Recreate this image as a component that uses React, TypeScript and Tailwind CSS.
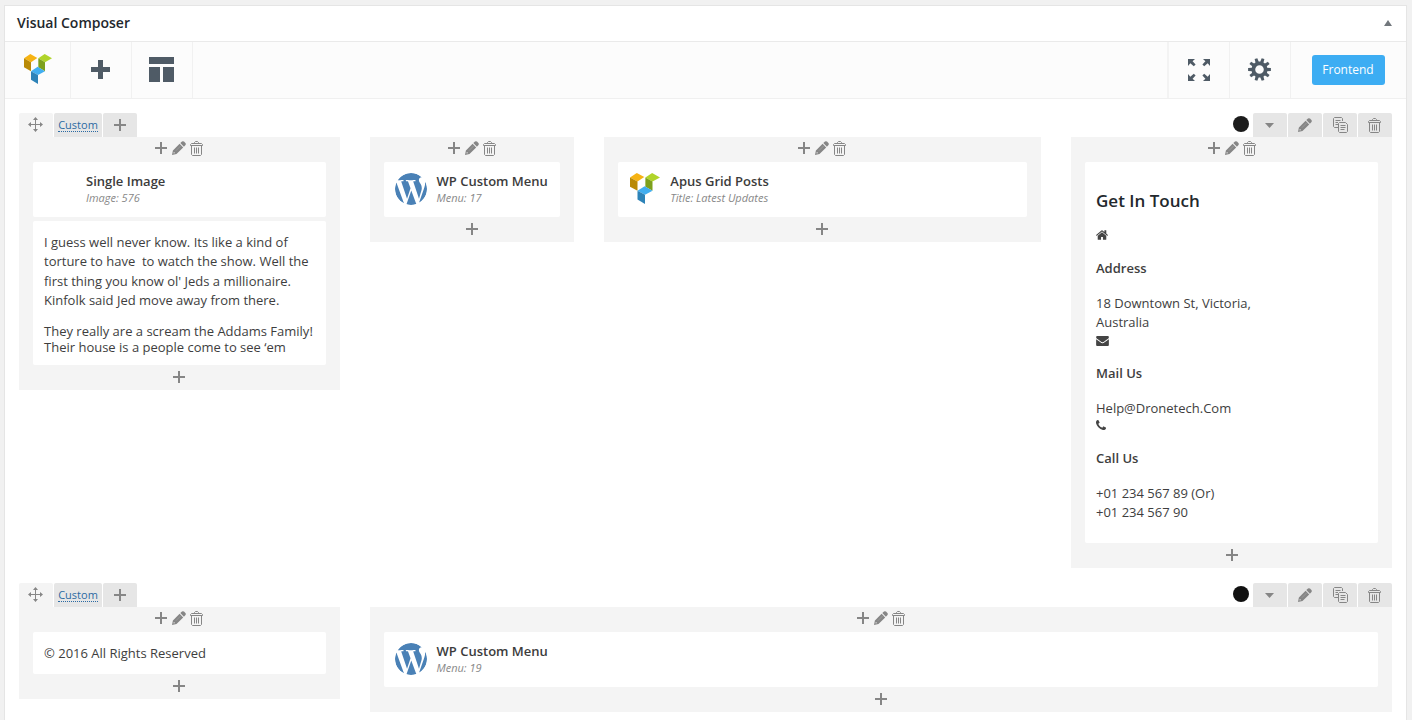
import type { ReactNode } from "react";
import { FaWordpress } from "react-icons/fa";

const HOME =
  "M1472 992v480q0 26-19 45t-45 19h-384v-384h-256v384h-384q-26 0-45-19t-19-45v-480q0-1 .5-3t.5-3l575-474 575 474q1 2 1 6zm223-69l-62 74q-8 9-21 11h-3q-13 0-21-7l-692-577-692 577q-12 8-24 7-13-2-21-11l-62-74q-8-10-7-23.5t11-21.5l719-599q32-26 76-26t76 26l244 204v-195q0-14 9-23t23-9h192q14 0 23 9t9 23v408l219 182q10 8 11 21.5t-7 23.5z";
const MAIL =
  "M1792 710v794q0 66-47 113t-113 47h-1472q-66 0-113-47t-47-113v-794q44 49 101 87 362 246 497 345 57 42 92.5 65.5t94.5 48 110 24.5h2q51 0 110-24.5t94.5-48 92.5-65.5q170-123 498-345 57-39 100-87zm0-294q0 79-49 151t-122 123q-376 261-468 325-10 7-42.5 31t-54 38.5-52 32.5-57.5 27-50 9h-2q-23 0-50-9t-57.5-27-52-32.5-54-38.5-42.5-31q-91-64-262-182.5t-205-142.5q-62-42-117-115.5t-55-136.5q0-78 41.5-130t118.5-52h1472q65 0 112.5 47t47.5 113z";
const PHONE =
  "M1600 1240q0 27-10 70.5t-21 68.5q-21 50-122 106-94 51-186 51-27 0-52.5-3.5t-57.5-12.5-47.5-14.5-55.5-20.5-49-18q-98-35-175-83-128-79-264.5-215.5t-215.5-264.5q-48-77-83-175-3-9-18-49t-20.5-55.5-14.5-47.5-12.5-57.5-3.5-52.5q0-92 51-186 56-101 106-122 25-11 68.5-21t70.5-10q14 0 21 3 18 6 53 76 11 19 30 54t35 63.5 31 53.5q3 4 17.5 25t21.5 35.5 7 28.5q0 20-28.5 50t-62 55-62 53-28.5 46q0 9 5 22.5t8.5 20.5 14 24 11.5 19q76 137 174 235t235 174q2 1 19 11.5t24 14 20.5 8.5 22.5 5q18 0 46-28.5t53-62 55-62 50-28.5q14 0 28.5 7t35.5 21.5 25 17.5q25 15 53.5 31t63.5 35 54 30q70 35 76 53 3 7 3 21z";

function CubesLogo({ className }: { className: string }) {
  return (
    <svg viewBox="0 0 84 91" preserveAspectRatio="none" className={className}>
      <path fill="#f6b313" d="M0 13 19 0l21 12-19 13z" />
      <path fill="#b98a06" d="m0 13 21 12v27L0 40z" />
      <path fill="#b0d42a" d="M43 13 62 0l22 13-21 12z" />
      <path fill="#7da01c" d="m43 13 20 12v27L43 40z" />
      <path fill="#41aef0" d="M21 52 41 39l22 13-21 12z" />
      <path fill="#2d83b8" d="m21 52 21 12v27L21 78z" />
    </svg>
  );
}

function PlusIcon() {
  return (
    <svg width="12" height="12" fill="#868686" shapeRendering="crispEdges">
      <path d="M5 0h2v12H5zM0 5h12v2H0z" />
    </svg>
  );
}

function PencilIcon() {
  return (
    <svg width="14" height="14" viewBox="0 0 14 14" fill="#868686">
      <path d="M0 14 .9 9.5 7.6 2.8l3.6 3.6-6.7 6.7zM8.3 2.1 10 .5Q11-.2 12 .6l1.4 1.4q.8 1 .1 1.9l-1.6 1.8z" />
      <path d="m1.9 11 1.1 1.1-1.1.4-.4-.4z" fill="#f4f4f4" />
      <path d="m3.8 9.8 5-5" stroke="#a8a8a8" strokeWidth=".6" />
    </svg>
  );
}

function TrashIcon() {
  return (
    <svg width="13" height="15" viewBox="0 0 13 15" fill="none" stroke="#868686">
      <path d="M4.5 2.5v-1l1-1h2l1 1v1M.5 4.5v-1l1-1h10l1 1v1zM1.5 4.5v9l1 1h8l1-1v-9M4.5 6.5v6M6.5 6.5v6M8.5 6.5v6" />
    </svg>
  );
}

function CopyIcon() {
  return (
    <svg width="15" height="16" viewBox="0 0 15 16" fill="none" stroke="#868686">
      <path d="M5 10.5H1.5l-1-1v-8l1-1h7l1 1V4M2.5 3.5h5M2.5 5.5H5M2.5 7.5H5M6.5 5.5h6l2 2v7l-1 1h-7l-1-1v-8zM7.5 8.5h5M7.5 10.5h5M7.5 12.5h4" />
    </svg>
  );
}

function MoveIcon() {
  return (
    <svg width="15" height="15" viewBox="0 0 15 15" fill="#868686">
      <path d="M7 2h1v11H7zM2 7h11v1H2zM7.5 0 10 3H5zM7.5 15 5 12h5zM0 7.5 3 5v5zM15 7.5 12 10V5z" />
    </svg>
  );
}

function GearIcon() {
  return (
    <svg width="23" height="23" viewBox="-11.5 -11.5 23 23">
      {[0, 36, 72, 108, 144, 180, 216, 252, 288, 324].map((a) => (
        <path key={a} d="M7-1.7 11.4-1.4v2.8L7 1.7z" transform={`rotate(${a})`} fill="#4f5b66" />
      ))}
      <circle r="6.2" fill="none" stroke="#4f5b66" strokeWidth="3.8" />
    </svg>
  );
}

function ExpandIcon() {
  const arrow = "M0 0h7L4.6 2.2 7.6 5.4 5.8 7.2 2.3 4.3 0 7z";
  return (
    <svg width="22" height="22" viewBox="0 0 22 22" fill="#4f5b66">
      <path d={arrow} />
      <path d={arrow} transform="matrix(-1 0 0 1 22 0)" />
      <path d={arrow} transform="matrix(1 0 0 -1 0 22)" />
      <path d={arrow} transform="matrix(-1 0 0 -1 22 22)" />
    </svg>
  );
}

function Glyph({ d, box, className }: { d: string; box: string; className: string }) {
  return (
    <svg viewBox={box} className={className} fill="#444">
      <path d={d} />
    </svg>
  );
}

function Tab({ className, children }: { className: string; children: ReactNode }) {
  return <div className={`flex h-6 items-center justify-center rounded-t-[2px] ${className}`}>{children}</div>;
}

function RowControls({ dot }: { dot: string }) {
  return (
    <div className="flex h-6 justify-between">
      <div className="flex gap-px">
        <Tab className="w-[34px] bg-[#f4f4f4] pr-px pb-px">
          <MoveIcon />
        </Tab>
        <Tab className="w-12 bg-[#e6e6e6]">
          <a className="border-b border-dotted border-[#2b6aa3] text-[11px] leading-[13px] text-[#2b6aa3]">Custom</a>
        </Tab>
        <Tab className="w-[34px] bg-[#e6e6e6]">
          <PlusIcon />
        </Tab>
      </div>
      <div className="flex gap-px">
        <div className={`mt-[3px] mr-[3px] size-4 rounded-full ${dot}`} />
        <Tab className="w-[34px] bg-[#e6e6e6] pr-px">
          <svg width="9" height="5" fill="#868686">
            <path d="M0 0h9L4.5 5z" />
          </svg>
        </Tab>
        <Tab className="w-[34px] bg-[#e6e6e6]">
          <PencilIcon />
        </Tab>
        <Tab className="w-[34px] bg-[#e6e6e6] pl-px">
          <CopyIcon />
        </Tab>
        <Tab className="w-[34px] bg-[#e6e6e6] pt-px pr-px">
          <TrashIcon />
        </Tab>
      </div>
    </div>
  );
}

function Column({ width, nudge = "", children }: { width: string; nudge?: string; children: ReactNode }) {
  return (
    <div className={`bg-[#f4f4f4] ${width}`}>
      <div className={`flex h-[25px] items-start justify-center pt-[3px] ${nudge}`}>
        <div className="flex h-4 w-[18px] justify-center pt-[2px]">
          <PlusIcon />
        </div>
        <div className="flex h-4 w-[18px] justify-center pt-px">
          <PencilIcon />
        </div>
        <div className="flex h-4 w-[18px] justify-center pt-px pr-px">
          <TrashIcon />
        </div>
      </div>
      <div className="mx-[14px] flex flex-col gap-1">{children}</div>
      <div className={`flex h-[25px] justify-center pt-[6px] ${nudge}`}>
        <PlusIcon />
      </div>
    </div>
  );
}

function Widget({ icon, title, meta, inset = "w-[41.5px]" }: { icon?: ReactNode; title: string; meta: string; inset?: string }) {
  return (
    <div className="flex h-[55px] rounded-[2px] bg-white pt-[11px] pl-[11px]">
      <div className={`shrink-0 ${inset}`}>{icon}</div>
      <div className="whitespace-nowrap">
        <div className="text-[13px] leading-[17px] font-semibold text-[#3c3c3c]">{title}</div>
        <div className="text-[11px] leading-4 text-[#888] italic">{meta}</div>
      </div>
    </div>
  );
}

// The tight viewBox and round clip drop the icon's outer ring.
const wordpress = <FaWordpress viewBox="43 43 426 426" className="size-8 rounded-full text-[#4a81b6]" />;

export default function App() {
  return (
    <div className="h-[720px] overflow-hidden bg-[#f1f1f1] pt-[5px] pr-[5px] pl-1 font-['Open_Sans',sans-serif] text-[13px] text-[#3e3e3e]">
      <div className="h-[760px] border border-[#e5e5e5] bg-white">
        <div className="flex h-9 items-center justify-between border-b border-[#eaeaea] pr-[14px] pb-[2px] pl-3">
          <h2 className="text-[14px] leading-5 font-semibold text-[#23282d]">Visual Composer</h2>
          <svg width="8" height="6" fill="#72777c">
            <path d="M0 6h8L4 0z" />
          </svg>
        </div>
        <div className="flex h-[57px] justify-between border-b border-[#f0f0f0] bg-[#fcfcfc]">
          <div className="flex">
            <div className="w-[66px] border-r border-[#f1f1f1] pt-3 pl-[19px]">
              <CubesLogo className="h-[30px] w-7" />
            </div>
            <div className="w-[61px] border-r border-[#f1f1f1] pt-[18px] pl-5">
              <svg width="19" height="19" fill="#4f5b66" shapeRendering="crispEdges">
                <path d="M7 0h5v19H7zM0 7h19v5H0z" />
              </svg>
            </div>
            <div className="w-[61px] border-r border-[#f1f1f1] pt-[15px] pl-[17px]">
              <svg width="25" height="25" fill="#4f5b66" shapeRendering="crispEdges">
                <path d="M0 0h25v7H0zM0 10h11v15H0zM14 10h11v15H14z" />
              </svg>
            </div>
          </div>
          <div className="flex">
            <div className="w-[62px] border-l-2 border-[#f3f3f3] pt-[17px] pl-[19px]">
              <ExpandIcon />
            </div>
            <div className="w-[61px] border-l border-[#f1f1f1] pt-4 pl-[18px]">
              <GearIcon />
            </div>
            <div className="w-[116px] border-l border-[#f1f1f1] pt-[13px] pl-[21px]">
              <div className="flex h-[30px] w-[73px] items-center justify-center rounded-[3px] bg-[#3dadf3] pr-px text-[12px] text-white">
                Frontend
              </div>
            </div>
          </div>
        </div>

        <div className="flex flex-col gap-[15px] pt-[14px] pr-[14px] pl-[14px]">
          <section>
            <RowControls dot="bg-[#1c1c1c]" />
            <div className="flex items-start justify-between">
              <Column width="w-[321px]" nudge="pr-px">
                <Widget title="Single Image" meta="Image: 576" inset="w-[42px]" />
                <div className="h-[144px] rounded-[2px] bg-white pt-[11.7px] pl-[11px] whitespace-pre">
                  <p className="leading-[19.5px]">
                    {"I guess well never know. Its like a kind of\ntorture to have  to watch the show. Well the\nfirst thing you know ol' Jeds a millionaire.\nKinfolk said Jed move away from there."}
                  </p>
                  <p className="mt-[12.3px] leading-4">
                    {"They really are a scream the Addams Family!\nTheir house is a people come to see ‘em"}
                  </p>
                </div>
              </Column>
              <Column width="w-[204px]">
                <Widget icon={wordpress} title="WP Custom Menu" meta="Menu: 17" />
              </Column>
              <Column width="w-[437px]" nudge="pr-px">
                <Widget
                  icon={<CubesLogo className="ml-px h-[31px] w-[30px]" />}
                  title="Apus Grid Posts"
                  meta="Title: Latest Updates"
                  inset="w-[41.3px]"
                />
              </Column>
              <Column width="w-[321px]" nudge="pl-px">
                <div className="rounded-[2px] bg-white pt-[27px] pb-[21px] pl-[11px] leading-[19px]">
                  <h3 className="text-[17px] leading-6 font-semibold text-[#23282d]">Get In Touch</h3>
                  <div className="mt-[13px] flex h-[19px] items-start pt-1">
                    <Glyph d={HOME} box="90 245 1612 1292" className="h-[10px] w-3" />
                  </div>
                  <p className="mt-[14px] font-semibold">Address</p>
                  <p className="mt-4">
                    18 Downtown St, Victoria,
                    <br />
                    Australia
                  </p>
                  <div className="flex h-[18px] items-center">
                    <Glyph d={MAIL} box="0 256 1792 1408" className="h-[10px] w-[13px]" />
                  </div>
                  <p className="mt-[14px] font-semibold">Mail Us</p>
                  <p className="mt-4">Help@Dronetech.Com</p>
                  <div className="flex h-4 items-start pt-[2px]">
                    <Glyph d={PHONE} box="192 128 1408 1408" className="size-[10px]" />
                  </div>
                  <p className="mt-[15px] font-semibold">Call Us</p>
                  <p className="mt-4">
                    +01 234 567 89 (Or)
                    <br />
                    +01 234 567 90
                  </p>
                </div>
              </Column>
            </div>
          </section>

          <section>
            <RowControls dot="bg-[#111111]" />
            <div className="flex items-start justify-between">
              <Column width="w-[321px]" nudge="pr-px">
                <div className="h-[42px] rounded-[2px] bg-white pt-3 pl-[11px] leading-[19px]">© 2016 All Rights Reserved</div>
              </Column>
              <Column width="w-[1022px]">
                <Widget icon={wordpress} title="WP Custom Menu" meta="Menu: 19" />
              </Column>
            </div>
          </section>
        </div>
      </div>
    </div>
  );
}
